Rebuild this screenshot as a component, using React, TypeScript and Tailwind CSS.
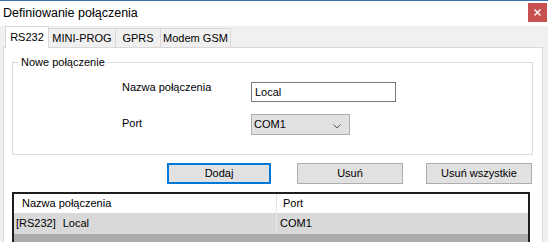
export default function App() {
  return (
    <div className="w-[548px] h-[242px] overflow-hidden bg-[#f0f0f0] text-black font-['Liberation_Sans',Arial,sans-serif] text-[11px] leading-[13px]">
      {/* title bar */}
      <div className="h-[26px] bg-white border-t border-[#3a73b8] flex items-start justify-between">
        <span className="pl-[3px] pt-[5px] text-[12.5px] leading-[15px]">Definiowanie połączenia</span>
        <div className="mt-[2px] mr-px w-[19px] h-[19px] bg-[#c75050] flex items-center justify-center">
          <svg width="7" height="7" viewBox="0 0 7 7">
            <path d="M0.5 0.5 L6.5 6.5 M6.5 0.5 L0.5 6.5" stroke="white" strokeWidth="1.4" fill="none" />
          </svg>
        </div>
      </div>

      {/* tabs */}
      <div className="h-[21px] flex items-end pl-[5px]">
        <div className="relative z-10 -mb-px h-[22px] w-[44px] bg-white border border-b-0 border-[#d9d9d9] flex items-center justify-center">
          RS232
        </div>
        <div className="h-[19px] w-[67px] border-t border-r border-[#d9d9d9] flex items-center justify-center">
          MINI-PROG
        </div>
        <div className="h-[19px] w-[45px] border-t border-r border-[#d9d9d9] flex items-center justify-center">
          GPRS
        </div>
        <div className="h-[19px] w-[70px] border-t border-r border-[#d9d9d9] flex items-center justify-center">
          Modem GSM
        </div>
      </div>

      {/* panel */}
      <div className="ml-[3px] w-[540px] h-[260px] bg-white border border-[#d9d9d9]">
        {/* group box */}
        <div className="relative ml-[8px] mt-[14px] w-[521px] h-[93px] border border-[#dcdcdc] pt-[19px] pl-[109px]">
          <span className="absolute -top-[7px] left-[6px] px-[2px] bg-white">Nowe połączenie</span>
          <div className="flex items-start">
            <span className="w-[129px] -mt-px">Nazwa połączenia</span>
            <div className="w-[145px] h-[20px] border border-[#7a7a7a] px-[3px] flex items-center">Local</div>
          </div>
          <div className="flex items-start mt-[12px]">
            <span className="w-[129px] pt-[3px]">Port</span>
            <div className="w-[99px] h-[21px] bg-[#e1e1e1] border border-[#adadad] pl-[2px] pr-[8px] flex items-center justify-between">
              <span>COM1</span>
              <svg width="8" height="5" viewBox="0 0 8 5" className="mt-[3px]">
                <path d="M0.5 0.5 L4 4 L7.5 0.5" stroke="#5a5a5a" strokeWidth="1" fill="none" />
              </svg>
            </div>
          </div>
        </div>

        {/* buttons */}
        <div className="flex mt-[8px]">
          <div className="ml-[163px] w-[104px] h-[21px] border-2 border-[#0078d7] bg-[#e1e1e1] flex items-center justify-center">
            Dodaj
          </div>
          <div className="ml-[26px] w-[106px] h-[21px] border border-[#adadad] bg-[#e1e1e1] flex items-center justify-center">
            Usuń
          </div>
          <div className="ml-[23px] w-[106px] h-[21px] border border-[#adadad] bg-[#e1e1e1] flex items-center justify-center">
            Usuń wszystkie
          </div>
        </div>

        {/* list view */}
        <div className="ml-[8px] mt-[8px] w-[518px] h-[80px] border-2 border-[#1e1e1e] bg-[#ababab]">
          <div className="h-[19px] bg-white flex items-stretch">
            <div className="w-[263px] pl-[8px] border-r border-[#e5e5e5] flex items-center">Nazwa połączenia</div>
            <div className="pl-[6px] flex items-center">Port</div>
          </div>
          <div className="h-[21px] bg-[#d9d9d9] flex items-stretch">
            <div className="w-[263px] pl-[2px] border-r border-[#e8e8e8] flex items-center">
              <span>[RS232]</span>
              <span className="ml-[7px]">Local</span>
            </div>
            <div className="pl-[3px] flex items-center">COM1</div>
          </div>
        </div>
      </div>
    </div>
  );
}
